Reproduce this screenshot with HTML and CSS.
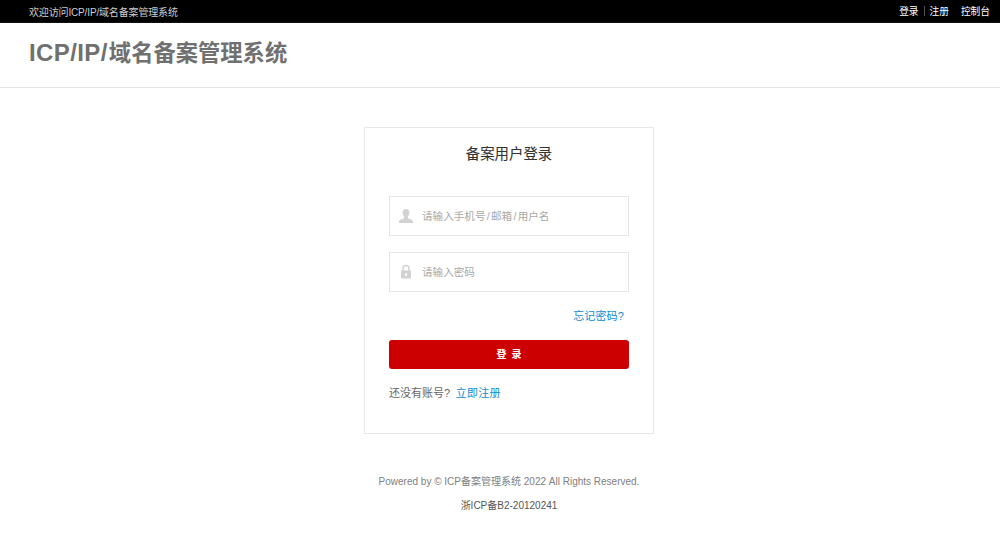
FILE: index.html
```html
<!DOCTYPE html>
<html lang="zh-CN">
<head>
<meta charset="utf-8">
<title>ICP/IP/域名备案管理系统</title>
<link rel="stylesheet" href="styles.css">
</head>
<body>
<div class="topbar">
  <span class="welcome">欢迎访问ICP/IP/域名备案管理系统</span>
  <nav class="toplinks">
    <a href="#">登录</a><i class="sep"></i><a href="#">注册</a><a href="#" class="console">控制台</a>
  </nav>
</div>
<header class="site-header"><h1><span class="latin">ICP/IP/</span>域名备案管理系统</h1></header>
<main class="main">
  <form class="card">
    <h2>备案用户登录</h2>
    <div class="field first">
      <svg class="icon" width="16" height="16" viewBox="0 0 16 16"><path fill="#d2d2d2" d="M8 1c2.200 0 3.400 1.600 3.400 3.700 0 1.600-.7 3-1.500 3.800v1.300c0 .6 1 .9 2.600 1.500 1.500.5 2.500 1 2.500 2.200V15H1v-1.500c0-1.200 1-1.700 2.500-2.200 1.600-.6 2.600-.9 2.600-1.500V8.500C5.300 7.700 4.600 6.300 4.600 4.700 4.600 2.600 5.800 1 8 1z"/></svg>
      <span class="ph">请输入手机号<span class="slash">/</span>邮箱<span class="slash">/</span>用户名</span>
    </div>
    <div class="field">
      <svg class="icon" width="16" height="16" viewBox="0 0 16 16"><path fill="none" stroke="#d2d2d2" stroke-width="1.500" d="M5 7.500V4.500C5 2.800 6.200 1.500 8 1.500s3 1.300 3 3v3"/><rect x="3" y="6.500" width="10" height="8" rx="1" fill="#d2d2d2"/><rect x="7.200" y="9" width="1.600" height="3" fill="#fff"/></svg>
      <span class="ph">请输入密码</span>
    </div>
    <div class="forgot"><a href="#">忘记密码?</a></div>
    <button type="button" class="submit">登 录</button>
    <p class="signup">还没有账号?<a href="#">立即注册</a></p>
  </form>
  <footer class="footer">
    <p class="copy">Powered by © ICP备案管理系统 2022 All Rights Reserved.</p>
    <p class="beian">浙ICP备B2-20120241</p>
  </footer>
</main>
</body>
</html>
```
FILE: styles.css
```css
* { box-sizing: border-box; }
html, body { margin: 0; padding: 0; background: #fff; }
body {
  font-family: "Liberation Sans", "Noto Sans CJK SC", sans-serif;
  color: #666;
  overflow: hidden;
}
a { text-decoration: none; }
.topbar {
  height: 23px;
  background: #000;
  color: #ccc;
  font-size: 10px;
  padding: 0 10px 0 29px;
  display: flex;
  align-items: center;
  justify-content: space-between;
  border-bottom: 1px solid #111;
}
.welcome { letter-spacing: -0.15px; }
.toplinks { display: flex; align-items: center; font-size: 9.700px; }
.toplinks a { color: #fff; }
.sep { width: 1px; height: 10px; background: #555; margin: 0 5px; }
.console { margin-left: 12px; }
.site-header {
  height: 65px;
  padding: 0 29px;
  border-bottom: 1px solid #e4e4e4;
  display: flex;
  align-items: center;
}
.site-header h1 {
  margin: 0 0 3px;
  font-size: 22.300px;
  font-weight: 700;
  color: #707070;
  line-height: 30px;
}
.latin { font-size: 24px; letter-spacing: 0.4px; margin-right: 1px; }
.main {
  padding: 39px 0 0 18px;
  display: flex;
  flex-direction: column;
  align-items: center;
}
.card {
  width: 290px;
  height: 307px;
  border: 1px solid #e8e8e8;
  padding: 0 24px;
}
.card h2 {
  margin: 16px 0 0;
  font-size: 14.400px;
  line-height: 20px;
  font-weight: 400;
  color: #333;
  text-align: center;
  -webkit-text-stroke: 0.1px #333;
}
.field {
  height: 40px;
  border: 1px solid #e5e5e5;
  margin-top: 16px;
  display: flex;
  align-items: center;
  padding-left: 8px;
}
.field.first { margin-top: 32px; }
.icon { flex: none; margin-right: 8px; }
.ph { font-size: 10.600px; color: #a8a8a8; margin-top: -2px; }
.slash { padding: 0 1.250px; }
.forgot {
  margin-top: 16px;
  height: 16px;
  line-height: 16px;
  text-align: right;
  padding-right: 5px;
  font-size: 11px;
  letter-spacing: 0.15px;
}
.forgot a, .signup a { color: #0e8bd0; }
.submit {
  display: block;
  width: 240px;
  height: 29px;
  margin-top: 16px;
  background: #cc0000;
  border: 0;
  border-radius: 3px;
  color: #fff;
  font-family: inherit;
  font-size: 10px;
  font-weight: 700;
  word-spacing: 2px;
  padding: 0 0 2px;
}
.signup {
  margin: 16px 0 0;
  font-size: 11px;
  line-height: 16px;
  color: #666;
}
.signup a { margin-left: 5.500px; letter-spacing: 0.3px; }
.footer { text-align: center; font-size: 10px; color: #808080; }
.copy { margin: 41px 0 0; line-height: 14px; }
.beian { margin: 10px 0 0; line-height: 14px; color: #555; }
```
